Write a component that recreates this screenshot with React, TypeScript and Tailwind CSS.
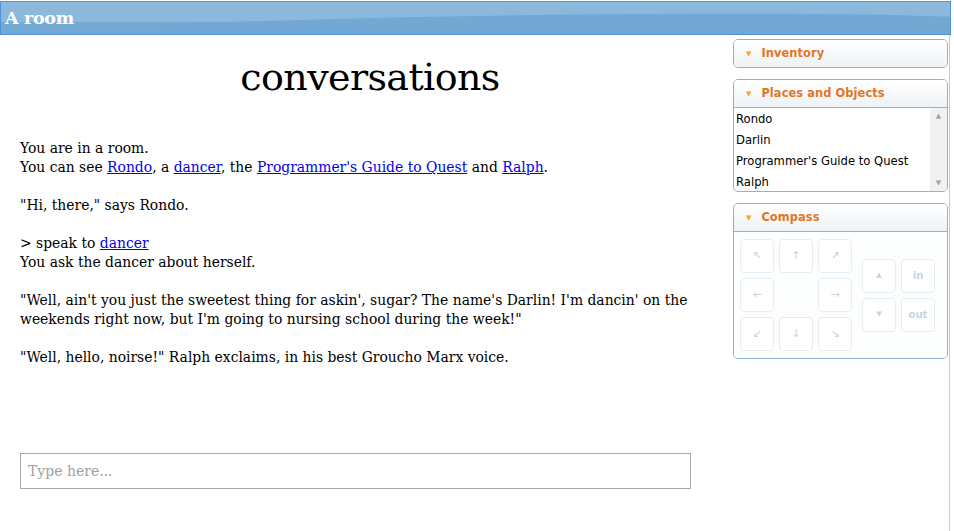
import React from 'react';

// --- Sidebar panel shell ---
const Panel = (props: { title: string; children?: React.ReactNode }) => {
  return (
    <div className="rounded-[5px] border border-[#86b5dd] bg-white overflow-hidden">
      <div className="flex items-center h-[27px] pl-[12px] pt-px bg-gradient-to-b from-white to-[#eef2f6]">
        <span className="text-[7px] text-[#f6a81f] leading-none mr-[10px]">▼</span>
        <span className="text-[11.4px] font-bold text-[#e37624] tracking-[0.1px]">{props.title}</span>
      </div>
      {props.children}
    </div>
  );
};

const CompassButton = (props: { label: string; small?: boolean; tiny?: boolean }) => (
  <div
    className={`w-[34px] h-[34px] rounded-[4px] border border-[#e6edf4] bg-white flex items-center justify-center text-[#c3d5e6] ${
      props.tiny ? 'text-[7px]' : props.small ? 'text-[10px] font-bold' : 'text-[11px]'
    }`}
  >
    {props.label}
  </div>
);

const Link = (props: { children: React.ReactNode }) => (
  <a href="#" className="text-[#0000ee] underline">
    {props.children}
  </a>
);

export default function App() {
  const places = ['Rondo', 'Darlin', "Programmer's Guide to Quest", 'Ralph'];

  return (
    <div className="w-[954px] h-[531px] bg-white overflow-hidden pt-px" style={{ fontFamily: '"DejaVu Sans", Verdana, sans-serif' }}>
      {/* title bar */}
      <div className="relative w-[951px] h-[34px] border border-[#4d93d0] bg-[#74a9d4] overflow-hidden">
        <div className="absolute left-0 top-0 w-full h-[20px] bg-[#8ab9dd]" />
        <div className="absolute left-[-10%] top-[14px] w-[120%] h-[40px] rounded-[50%] bg-[#72a8d3] rotate-[-1deg]" />
        <div
          className="relative pl-[4px] pt-[6px] text-[17.5px] font-bold text-white leading-[20px] tracking-[-0.3px]"
          style={{ fontFamily: '"DejaVu Serif", Georgia, serif' }}
        >
          A room
        </div>
      </div>

      <div className="flex border-r border-[#c8c8c8] w-[950px] h-[496px]">
        {/* main column */}
        <div className="w-[732px] shrink-0 flex flex-col" style={{ fontFamily: '"DejaVu Serif", Georgia, serif' }}>
          <h1 className="text-center text-[38px] leading-[44px] mt-[20px] text-black tracking-[-0.6px] pl-[8px]">conversations</h1>
          <div className="pl-[20px] pt-[40px] text-[13.9px] leading-[19px] text-black pr-[8px]">
            You are in a room.
            <br />
            You can see <Link>Rondo</Link>, a <Link>dancer</Link>, the <Link>Programmer's Guide to Quest</Link> and{' '}
            <Link>Ralph</Link>.
            <br />
            <br />
            "Hi, there," says Rondo.
            <br />
            <br />
            &gt; speak to <Link>dancer</Link>
            <br />
            You ask the dancer about herself.
            <br />
            <br />
            <span className="whitespace-nowrap">
              "Well, ain't you just the sweetest thing for askin', sugar? The name's Darlin! I'm dancin' on the
            </span>
            <br />
            weekends right now, but I'm going to nursing school during the week!"
            <br />
            <br />
            "Well, hello, noirse!" Ralph exclaims, in his best Groucho Marx voice.
          </div>
          <div className="mt-auto mb-[42px] pl-[20px]">
            <div className="w-[671px] h-[36px] border border-[#a9a9a9] flex items-center pl-[7px] text-[14px] text-[#a0a0a0]">
              Type here...
            </div>
          </div>
        </div>

        {/* sidebar */}
        <div className="flex flex-col gap-[11px] pt-[4px] w-[215px] ml-px">
          <Panel title="Inventory" />
          <Panel title="Places and Objects">
            <div className="flex border-t border-[#86b5dd] h-[84px]">
              <div className="flex-1 pl-[2px] pt-px">
                {places.map((p) => (
                  <div key={p} className="h-[21px] leading-[20px] text-[11.6px] text-black">
                    {p}
                  </div>
                ))}
              </div>
              <div className="w-[17px] bg-[#f1f1f1] flex flex-col items-center justify-between py-[3px] text-[7px] text-[#a3a3a3]">
                <span>▲</span>
                <span>▼</span>
              </div>
            </div>
          </Panel>
          <Panel title="Compass">
            <div className="flex items-center border-t border-[#86b5dd] bg-[#fdfefe] pl-[6px] pt-[6px] pb-[6px] h-[127px]">
              <div className="grid grid-cols-3 gap-[5px]">
                <CompassButton label="↖" />
                <CompassButton label="↑" />
                <CompassButton label="↗" />
                <CompassButton label="←" />
                <div />
                <CompassButton label="→" />
                <CompassButton label="↙" />
                <CompassButton label="↓" />
                <CompassButton label="↘" />
              </div>
              <div className="grid grid-cols-2 gap-[5px] ml-[10px]">
                <CompassButton label="▲" tiny />
                <CompassButton label="in" small />
                <CompassButton label="▼" tiny />
                <CompassButton label="out" small />
              </div>
            </div>
          </Panel>
        </div>
      </div>
    </div>
  );
}
